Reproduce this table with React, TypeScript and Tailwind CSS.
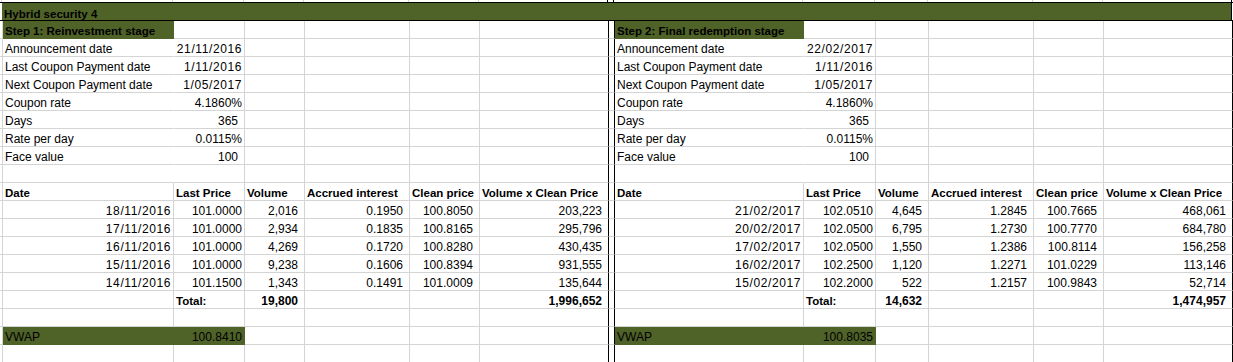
import clsx from "clsx";

type Spec = { t?: string; r?: boolean; b?: boolean; g?: boolean; noR?: boolean; d?: boolean; wide?: boolean };
type Cells = (Spec | undefined)[];

// widths of the sheet columns, gutter + A..F + spacer + H..M + edge
const cols = [
  { w: "w-[2px]", line: "border-r-[#d4d4d4]" },
  { w: "w-[171px]", line: "border-r-[#d4d4d4]" },
  { w: "w-[71px]", line: "border-r-[#d4d4d4]" },
  { w: "w-[60px]", line: "border-r-[#d4d4d4]" },
  { w: "w-[105px]", line: "border-r-[#d4d4d4]" },
  { w: "w-[70px]", line: "border-r-[#d4d4d4]" },
  { w: "w-[129px]", line: "border-r-black" },
  { w: "w-[6px]", line: "border-r-black" },
  { w: "w-[189px]", line: "border-r-[#d4d4d4]" },
  { w: "w-[72px]", line: "border-r-[#d4d4d4]" },
  { w: "w-[53px]", line: "border-r-[#d4d4d4]" },
  { w: "w-[105px]", line: "border-r-[#d4d4d4]" },
  { w: "w-[70px]", line: "border-r-[#d4d4d4]" },
  { w: "w-[129px]", line: "border-r-black" },
  { w: "w-[1px]", line: "border-r-transparent" },
];

const leftInfo = [
  ["Announcement date", "21/11/2016"],
  ["Last Coupon Payment date", "1/11/2016"],
  ["Next Coupon Payment date", "1/05/2017"],
  ["Coupon rate", "4.1860%"],
  ["Days", "365"],
  ["Rate per day", "0.0115%"],
  ["Face value", "100"],
];

const rightInfo = [
  ["Announcement date", "22/02/2017"],
  ["Last Coupon Payment date", "1/11/2016"],
  ["Next Coupon Payment date", "1/05/2017"],
  ["Coupon rate", "4.1860%"],
  ["Days", "365"],
  ["Rate per day", "0.0115%"],
  ["Face value", "100"],
];

const leftTrades = [
  ["18/11/2016", "101.0000", "2,016", "0.1950", "100.8050", "203,223"],
  ["17/11/2016", "101.0000", "2,934", "0.1835", "100.8165", "295,796"],
  ["16/11/2016", "101.0000", "4,269", "0.1720", "100.8280", "430,435"],
  ["15/11/2016", "101.0000", "9,238", "0.1606", "100.8394", "931,555"],
  ["14/11/2016", "101.1500", "1,343", "0.1491", "101.0009", "135,644"],
];

const rightTrades = [
  ["21/02/2017", "102.0510", "4,645", "1.2845", "100.7665", "468,061"],
  ["20/02/2017", "102.0500", "6,795", "1.2730", "100.7770", "684,780"],
  ["17/02/2017", "102.0500", "1,550", "1.2386", "100.8114", "156,258"],
  ["16/02/2017", "102.2500", "1,120", "1.2271", "101.0229", "113,146"],
  ["15/02/2017", "102.2000", "522", "1.2157", "100.9843", "52,714"],
];

const headers = ["Date", "Last Price", "Volume", "Accrued interest", "Clean price", "Volume x Clean Price"];

function pad(a: Cells): Cells {
  return [...a, ...Array(6 - a.length).fill(undefined)];
}

function block(a: Cells, b: Cells): Cells {
  return [undefined, ...pad(a), undefined, ...pad(b), undefined];
}

const info = (label: string, value: string): Cells => [
  { t: label, noR: true },
  { t: value, r: true, d: value.includes("/"), wide: !value.includes("/") && !value.includes("%") },
];

const trade = (row: string[]): Cells => [
  { t: row[0], r: true, d: true },
  { t: row[1], r: true },
  ...row.slice(2).map((t) => ({ t, r: true, wide: true })),
];

const rows: Cells[] = [
  block([{ t: "Step 1: Reinvestment stage", b: true, g: true }], [{ t: "Step 2: Final redemption stage", b: true, g: true }]),
  ...leftInfo.map((l, i) => block(info(l[0], l[1]), info(rightInfo[i][0], rightInfo[i][1]))),
  block([{ noR: true }], [{ noR: true }]),
  block(headers.map((t) => ({ t, b: true })), headers.map((t) => ({ t, b: true }))),
  ...leftTrades.map((l, i) => block(trade(l), trade(rightTrades[i]))),
  block(
    [undefined, { t: "Total:", b: true }, { t: "19,800", b: true, r: true, wide: true }, undefined, undefined, { t: "1,996,652", b: true, r: true, wide: true }],
    [undefined, { t: "Total:", b: true }, { t: "14,632", b: true, r: true, wide: true }, undefined, undefined, { t: "1,474,957", b: true, r: true, wide: true }]
  ),
  block([], []),
  block(
    [{ t: "VWAP", g: true }, { t: "100.8410", r: true, g: true }],
    [{ t: "VWAP", g: true }, { t: "100.8035", r: true, g: true }]
  ),
  block([], []),
];

function Cell({ i, spec }: { i: number; spec?: Spec }) {
  const col = cols[i];
  return (
    <div
      className={clsx(
        col.w,
        "shrink-0 h-full flex items-end border-r border-b",
        spec?.g
          ? "bg-[#4f6228] border-transparent"
          : clsx("border-b-[#d4d4d4]", spec?.noR ? "border-r-transparent" : col.line),
        spec?.r ? (spec.wide ? "justify-end pr-[6px]" : spec.d ? "justify-end pr-[2px]" : "justify-end pr-[2px]") : "pl-[2px]"
      )}
    >
      {spec?.t && (
        <span
          className={clsx(
            "whitespace-nowrap leading-[12px] mb-[1px]",
            spec.b && !spec.r ? "text-[11.5px]" : "text-[12px]",
            spec.b && "font-bold",
            spec.d && "tracking-[0.6px]"
          )}
        >
          {spec.t}
        </span>
      )}
    </div>
  );
}

export default function App() {
  return (
    <div className="w-[1233px] h-[362px] overflow-hidden bg-white text-black font-['Liberation_Sans',Arial,sans-serif]">
      {/* sliver of the row above */}
      <div className="flex h-[2px]">
        {cols.map((c, i) => (
          <div key={i} className={clsx(c.w, "shrink-0 h-full border-r", c.line)} />
        ))}
      </div>

      {/* title bar */}
      <div className="flex h-[19px]">
        <div className="w-[2px] shrink-0 border-y border-black" />
        <div className="w-[1230px] shrink-0 flex items-end pl-[2px] bg-[#4f6228] border-y border-r border-black">
          <span className="whitespace-nowrap leading-[12px] text-[11.5px] font-bold">Hybrid security 4</span>
        </div>
        <div className="w-[1px] shrink-0 border-y border-black" />
      </div>

      {rows.map((cells, r) => (
        <div key={r} className="flex h-[18px]">
          {cells.map((spec, i) => (
            <Cell key={i} i={i} spec={spec} />
          ))}
        </div>
      ))}
    </div>
  );
}
